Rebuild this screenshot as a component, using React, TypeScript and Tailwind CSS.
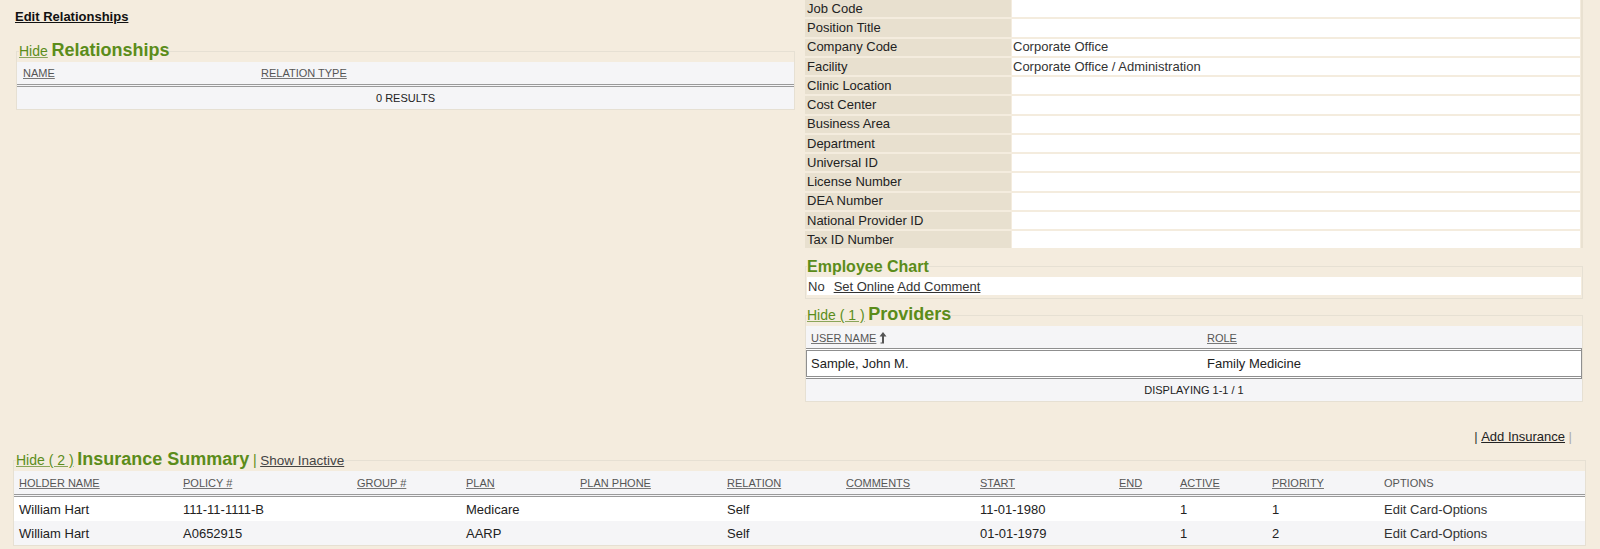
import React from "react";

const fields: [string, string][] = [
  ["Job Code", ""],
  ["Position Title", ""],
  ["Company Code", "Corporate Office"],
  ["Facility", "Corporate Office / Administration"],
  ["Clinic Location", ""],
  ["Cost Center", ""],
  ["Business Area", ""],
  ["Department", ""],
  ["Universal ID", ""],
  ["License Number", ""],
  ["DEA Number", ""],
  ["National Provider ID", ""],
  ["Tax ID Number", ""],
];

const insCols = [
  "HOLDER NAME",
  "POLICY #",
  "GROUP #",
  "PLAN",
  "PLAN PHONE",
  "RELATION",
  "COMMENTS",
  "START",
  "END",
  "ACTIVE",
  "PRIORITY",
];

const policies = [
  ["William Hart", "111-11-1111-B", "", "Medicare", "", "Self", "", "11-01-1980", "", "1", "1"],
  ["William Hart", "A0652915", "", "AARP", "", "Self", "", "01-01-1979", "", "1", "2"],
];

const grid =
  "grid grid-cols-[164px_174px_109px_114px_147px_119px_134px_139px_61px_92px_112px_1fr]";

function SortUp() {
  return (
    <svg width="8" height="12" viewBox="0 0 8 12" className="ml-[3px] inline-block align-[-2px]">
      <path d="M4 0 L7.5 4.5 L5 4.5 L5 11.5 L1.5 11.5 L1.5 10.5 L3 10.5 L3 4.5 L0.5 4.5 Z" fill="#555" />
    </svg>
  );
}

function HeadLink({ children }: { children: React.ReactNode }) {
  return <span className="text-[11px] uppercase text-[#555] underline decoration-[#777]">{children}</span>;
}

function HideLink({ children }: { children: React.ReactNode }) {
  return <span className="text-[14px] text-[#5b8c1a] underline decoration-[#8aa55a]">{children}</span>;
}

export default function App() {
  return (
    <div className="min-h-[549px] w-[1600px] bg-[#f4ecde] font-['Liberation_Sans',Arial,sans-serif] text-[13px] text-[#222]">
      <div className="flex items-start">
        {/* left column */}
        <div className="w-[805px] shrink-0 pl-[16px]">
          <div className="-ml-px pt-[10px] text-[13px] font-bold leading-[14px] text-[#111] underline">
            Edit Relationships
          </div>
          <fieldset className="mt-[16px] w-[779px] border border-[#e6e0d3]">
            <legend className="ml-[2px] whitespace-nowrap leading-[21px]">
              <HideLink>Hide</HideLink>{" "}
              <span className="text-[18px] font-bold text-[#5b8c1a]">Relationships</span>
            </legend>
            <div className="flex h-[25px] items-center border-b-[3px] border-double border-[#9a9a9a] bg-[#f5f5f7]">
              <div className="w-[244px] pl-[6px]">
                <HeadLink>Name</HeadLink>
              </div>
              <div>
                <HeadLink>Relation Type</HeadLink>
              </div>
            </div>
            <div className="flex h-[22px] items-center justify-center bg-[#f5f5f7] text-[11px] text-[#222]">
              0 RESULTS
            </div>
          </fieldset>
        </div>

        {/* right column */}
        <div className="w-[778px] shrink-0">
          <div className="flex flex-col gap-[2px] border-r-2 border-[#e9e1d1] pr-[1px]">
            {fields.map(([label, value]) => (
              <div key={label} className="flex h-[17.25px] gap-[1px]">
                <div className="flex w-[206px] items-center bg-[#e8e0cf] pl-[2px] text-[#222]">{label}</div>
                <div className="flex flex-1 items-center bg-white pl-[1px] text-[#333]">{value}</div>
              </div>
            ))}
          </div>

          <fieldset className="mt-[9px] border border-[#e6e0d3] pb-[3px]">
            <legend className="ml-[1px] text-[16px] font-bold leading-[19px] text-[#5b8c1a]">Employee Chart</legend>
            <div className="mx-px mt-[1px] flex h-[18px] items-center bg-white pl-[1px] text-[#333]">
              <span>No</span>
              <span className="ml-[9px] underline">Set Online</span>
              <span className="ml-[3px] underline">Add Comment</span>
            </div>
          </fieldset>

          <fieldset className="mt-[5px] border border-[#e6e0d3]">
            <legend className="ml-[1px] whitespace-nowrap leading-[21px]">
              <HideLink>Hide ( 1 )</HideLink>{" "}
              <span className="text-[18px] font-bold text-[#5b8c1a]">Providers</span>
            </legend>
            <div className="flex h-[22px] items-center bg-[#f5f5f7]">
              <div className="w-[401px] pl-[5px]">
                <HeadLink>User Name</HeadLink>
                <SortUp />
              </div>
              <div>
                <HeadLink>Role</HeadLink>
              </div>
            </div>
            <div className="flex h-[31px] items-center border border-y-[3px] border-double border-[#8f8f8f] bg-white">
              <div className="w-[400px] pl-[4px]">Sample, John M.</div>
              <div>Family Medicine</div>
            </div>
            <div className="flex h-[22px] items-center justify-center bg-[#f5f5f7] text-[11px]">
              DISPLAYING 1-1 / 1
            </div>
          </fieldset>
        </div>
      </div>

      {/* insurance */}
      <div className="mt-[27px] flex justify-end pr-[28px] leading-[15px]">
        <span className="text-[#333]">|&nbsp;</span>
        <span className="underline">Add Insurance</span>
        <span className="text-[#aaa]">&nbsp;|</span>
      </div>
      <fieldset className="mx-[13px] mt-[5px] w-[1573px] border border-[#e6e0d3]">
        <legend className="ml-[2px] whitespace-nowrap leading-[21px]">
          <HideLink>Hide ( 2 )</HideLink>{" "}
          <span className="text-[18px] font-bold text-[#5b8c1a]">Insurance Summary</span>{" "}
          <span className="text-[14px] text-[#5b8c1a]">|</span>{" "}
          <span className="text-[13.5px] text-[#444] underline">Show Inactive</span>
        </legend>
        <div className={`${grid} h-[26px] items-center border-b-[3px] border-double border-[#9a9a9a] bg-[#f5f5f7]`}>
          {insCols.map((c) => (
            <div key={c} className="pl-[5px]">
              <HeadLink>{c}</HeadLink>
            </div>
          ))}
          <div className="pl-[5px] text-[11px] text-[#555]">OPTIONS</div>
        </div>
        {policies.map((row, i) => (
          <div
            key={i}
            className={`${grid} h-[24px] items-center ${i % 2 === 0 ? "bg-white" : "bg-[#f5f5f7]"}`}
          >
            {row.map((cell, j) => (
              <div key={j} className="pl-[5px]">
                {cell}
              </div>
            ))}
            <div className="pl-[5px] text-[#333]">Edit Card-Options</div>
          </div>
        ))}
      </fieldset>
    </div>
  );
}
